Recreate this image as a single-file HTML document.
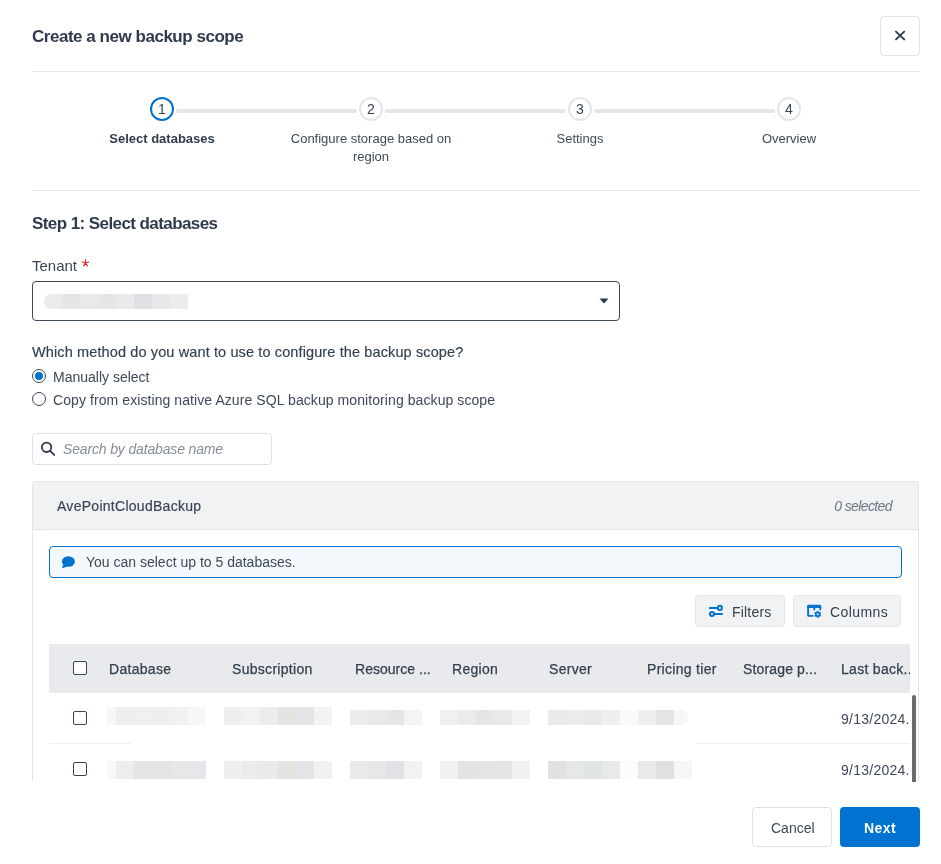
<!DOCTYPE html>
<html><head><meta charset="utf-8">
<style>
*{box-sizing:border-box;margin:0;padding:0}
html,body{width:941px;height:864px;overflow:hidden;background:#fff}
body{will-change:transform;position:relative;font-family:"Liberation Sans",sans-serif;color:#3a4656}
.a{position:absolute;white-space:nowrap}
.t{line-height:20px;height:20px}
.hr{position:absolute;height:1px;background:#e4e7ea}
.circ{position:absolute;width:24px;height:24px;border-radius:50%;border:2px solid #e4e6e9;background:#fff;text-align:center;font-size:14px;line-height:20px;color:#36424f}
.sline{position:absolute;top:109px;height:4px;border-radius:2px;background:#e4e6e9}
.slab{position:absolute;top:130px;width:200px;text-align:center;font-size:13px;line-height:18px;color:#3f4a58}
.cb{position:absolute;width:14px;height:14px;border:1.5px solid #394655;border-radius:2px;background:#fff}
.th{position:absolute;top:659px;letter-spacing:0.3px;font-size:14px;line-height:20px;color:#33404f;-webkit-text-stroke:0.25px #33404f}
.blocks i{position:absolute;display:block}
</style></head>
<body>
<!-- Title -->
<div class="a t" style="left:32px;top:27px;font-size:17px;font-weight:bold;letter-spacing:-0.47px;color:#2f3b4c">Create a new backup scope</div>
<!-- close -->
<div class="a" style="left:880px;top:16px;width:40px;height:40px;border:1px solid #dfe3e6;border-radius:4px"></div>
<svg class="a" style="left:890px;top:26px" width="20" height="20" viewBox="0 0 20 20"><path d="M6 5.6 L14.2 13.4 M14.2 5.6 L6 13.4" stroke="#2c3a4d" stroke-width="1.9" stroke-linecap="round"/></svg>
<div class="hr" style="left:32px;top:71px;width:888px"></div>

<!-- stepper -->
<div class="sline" style="left:176px;width:181px"></div>
<div class="sline" style="left:385px;width:181px"></div>
<div class="sline" style="left:594px;width:181px"></div>
<div class="circ" style="left:150px;top:97px;border-color:#0073d1">1</div>
<div class="circ" style="left:359px;top:97px">2</div>
<div class="circ" style="left:568px;top:97px">3</div>
<div class="circ" style="left:777px;top:97px">4</div>
<div class="slab" style="left:62px;font-weight:bold;color:#2f3b4c">Select databases</div>
<div class="slab" style="left:271px">Configure storage based on<br>region</div>
<div class="slab" style="left:480px">Settings</div>
<div class="slab" style="left:689px">Overview</div>
<div class="hr" style="left:32px;top:190px;width:888px"></div>

<!-- step 1 -->
<div class="a t" style="left:32px;top:214px;font-size:17px;font-weight:bold;letter-spacing:-0.58px;color:#2f3b4c">Step 1: Select databases</div>
<div class="a t" style="left:32px;top:256px;font-size:15px;color:#3a4656">Tenant</div>
<svg class="a" style="left:81px;top:259px" width="9" height="8" viewBox="0 0 9 8"><path d="M4.5 0.8 V4 M4.5 4 L1.3 3 M4.5 4 L7.7 3 M4.5 4 L2.6 6.8 M4.5 4 L6.4 6.8" stroke="#d3302c" stroke-width="1.3" stroke-linecap="round"/></svg>
<div class="a" style="left:32px;top:281px;width:588px;height:40px;border:1px solid #3b4858;border-radius:4px"></div>
<div class="blocks"><i style="left:44px;top:294px;width:18px;height:15px;background:#eaebed;border-radius:7px 0 0 7px"></i><i style="left:62px;top:294px;width:18px;height:15px;background:#e5e6e8"></i><i style="left:80px;top:294px;width:18px;height:15px;background:#e9e9eb"></i><i style="left:98px;top:294px;width:18px;height:15px;background:#e5e6e8"></i><i style="left:116px;top:294px;width:18px;height:15px;background:#e9eaec"></i><i style="left:134px;top:294px;width:18px;height:15px;background:#dfe0e3"></i><i style="left:152px;top:294px;width:18px;height:15px;background:#e7e8ea"></i><i style="left:170px;top:294px;width:18px;height:15px;background:#ececed"></i></div>
<svg class="a" style="left:599px;top:298px" width="10" height="6" viewBox="0 0 10 6"><path d="M0.5 0.5 H9.5 L5 5.5 Z" fill="#2c3a4c"/></svg>

<div class="a t" style="left:32px;top:342px;font-size:14.5px;letter-spacing:0.12px;color:#33404f;-webkit-text-stroke:0.15px #33404f">Which method do you want to use to configure the backup scope?</div>
<div class="a" style="left:32px;top:369px;width:14px;height:14px;border:1px solid #3b4858;border-radius:50%"></div>
<div class="a" style="left:35px;top:372px;width:8px;height:8px;background:#0073d1;border-radius:50%"></div>
<div class="a t" style="left:53px;top:367px;font-size:14px;color:#3d4958">Manually select</div>
<div class="a" style="left:32px;top:392px;width:14px;height:14px;border:1px solid #3b4858;border-radius:50%"></div>
<div class="a t" style="left:53px;top:390px;font-size:14px;letter-spacing:0.08px;color:#3d4958">Copy from existing native Azure SQL backup monitoring backup scope</div>

<!-- search -->
<div class="a" style="left:32px;top:433px;width:240px;height:32px;border:1px solid #dfe2e5;border-radius:4px"></div>
<svg class="a" style="left:36px;top:438px" width="24" height="22" viewBox="0 0 24 22"><circle cx="10.6" cy="9.3" r="4.7" fill="none" stroke="#2c3a4c" stroke-width="1.8"/><path d="M14.2 12.9 L18.2 16.9" stroke="#2c3a4c" stroke-width="1.9" stroke-linecap="round"/></svg>
<div class="a t" style="left:63px;top:439px;font-size:14px;letter-spacing:-0.15px;font-style:italic;color:#868e98">Search by database name</div>

<!-- panel -->
<div class="a" style="left:32px;top:481px;width:887px;height:300px;border:1px solid #e3e6e9;border-bottom:none;border-radius:4px 4px 0 0;overflow:hidden">
  <div style="position:absolute;left:0;top:0;width:100%;height:48px;background:#f1f2f4;border-bottom:1px solid #e1e4e7"></div>
</div>
<div class="a t" style="left:57px;top:496px;font-size:14px;letter-spacing:0.28px;color:#3a4656;-webkit-text-stroke:0.2px #3a4656">AvePointCloudBackup</div>
<div class="a t" style="left:791px;width:101px;text-align:right;top:496px;font-size:14px;letter-spacing:-0.6px;font-style:italic;color:#6e7782">0 selected</div>

<!-- info -->
<div class="a" style="left:49px;top:546px;width:853px;height:32px;border:1px solid #0073d1;background:#f4f8fc;border-radius:4px"></div>
<svg class="a" style="left:58px;top:552px" width="22" height="20" viewBox="0 0 22 20"><ellipse cx="10.4" cy="9.5" rx="6.5" ry="5.2" fill="#0073d1"/><path d="M5.6 12.6 L4.4 15.8 L9 14.3 Z" fill="#0073d1" stroke="#0073d1" stroke-width="0.7" stroke-linejoin="round"/></svg>
<div class="a t" style="left:86px;top:552px;font-size:14px;color:#3d4958">You can select up to 5 databases.</div>

<!-- filter buttons -->
<div class="a" style="left:695px;top:595px;width:90px;height:32px;background:#f1f2f4;border:1px solid #e3e5e8;border-radius:4px"></div>
<svg class="a" style="left:704px;top:600px" width="24" height="22" viewBox="0 0 24 22"><path d="M5.8 7.9 H13.2 M10.4 14 H18" stroke="#0073d1" stroke-width="2" stroke-linecap="round"/><circle cx="15.9" cy="7.9" r="2.05" fill="none" stroke="#0073d1" stroke-width="2"/><circle cx="8" cy="14" r="2.05" fill="none" stroke="#0073d1" stroke-width="2"/></svg>
<div class="a t" style="left:732px;top:602px;font-size:14px;letter-spacing:0.2px;color:#33404f">Filters</div>
<div class="a" style="left:793px;top:595px;width:108px;height:32px;background:#f1f2f4;border:1px solid #e3e5e8;border-radius:4px"></div>
<svg class="a" style="left:802px;top:600px" width="24" height="22" viewBox="0 0 24 22"><path d="M10.6 15.9 H7 Q6.1 15.9 6.1 15 V6.5 M18.3 6.5 V9.6 M12.3 7 V9.6" fill="none" stroke="#0073d1" stroke-width="1.9" stroke-linecap="round"/><path d="M5.1 7.9 V6 Q5.1 4.7 6.4 4.7 H17.8 Q19.1 4.7 19.1 6 V7.9 Z" fill="#0073d1"/><g transform="translate(15.7 14.3)" fill="#0073d1"><circle r="2.6"/><rect x="-0.9" y="-3.5" width="1.8" height="7" rx="0.4"/><rect x="-0.9" y="-3.5" width="1.8" height="7" rx="0.4" transform="rotate(60)"/><rect x="-0.9" y="-3.5" width="1.8" height="7" rx="0.4" transform="rotate(120)"/></g><circle cx="15.7" cy="14.3" r="0.95" fill="#f1f2f4"/></svg>
<div class="a t" style="left:830px;top:602px;font-size:14px;letter-spacing:0.4px;color:#33404f">Columns</div>

<!-- table -->
<div class="a" style="left:49px;top:644px;width:861px;height:49px;background:#e8eaed"></div>
<div class="cb" style="left:73px;top:661px"></div>
<div class="th" style="left:109px">Database</div>
<div class="th" style="left:232px">Subscription</div>
<div class="th" style="left:355px;letter-spacing:0.02px">Resource ...</div>
<div class="th" style="left:452px">Region</div>
<div class="th" style="left:549px">Server</div>
<div class="th" style="left:647px">Pricing tier</div>
<div class="th" style="left:743px;letter-spacing:0.15px">Storage p...</div>
<div class="a" style="left:841px;top:644px;width:69px;height:49px;overflow:hidden"><div class="th" style="left:0;top:15px">Last back...</div></div>

<div class="hr" style="left:49px;top:743px;width:82px;background:#eceef0"></div><div class="hr" style="left:696px;top:743px;width:214px;background:#eceef0"></div>
<div class="blocks"><i style="left:107px;top:707px;width:9px;height:18px;background:#f7f7f7"></i><i style="left:107px;top:761px;width:9px;height:18px;background:#f8f8f8"></i><i style="left:116px;top:707px;width:18px;height:18px;background:#eeeff0"></i><i style="left:116px;top:761px;width:18px;height:18px;background:#eceded"></i><i style="left:134px;top:707px;width:18px;height:18px;background:#eff0f0"></i><i style="left:134px;top:761px;width:18px;height:18px;background:#e3e4e7"></i><i style="left:152px;top:707px;width:18px;height:18px;background:#efefef"></i><i style="left:152px;top:761px;width:18px;height:18px;background:#e4e4e4"></i><i style="left:170px;top:707px;width:18px;height:18px;background:#f1f1f1"></i><i style="left:170px;top:761px;width:18px;height:18px;background:#e6e7e7"></i><i style="left:188px;top:707px;width:18px;height:18px;background:#f6f7f8"></i><i style="left:188px;top:761px;width:18px;height:18px;background:#e5e7ea"></i><i style="left:224px;top:707px;width:18px;height:18px;background:#efefef"></i><i style="left:224px;top:761px;width:18px;height:18px;background:#eeefef"></i><i style="left:242px;top:707px;width:18px;height:18px;background:#f1f2f2"></i><i style="left:242px;top:761px;width:18px;height:18px;background:#ebebeb"></i><i style="left:260px;top:707px;width:18px;height:18px;background:#ebeced"></i><i style="left:260px;top:761px;width:18px;height:18px;background:#e9eaea"></i><i style="left:278px;top:707px;width:18px;height:18px;background:#e3e3e1"></i><i style="left:278px;top:761px;width:18px;height:18px;background:#e3e3e0"></i><i style="left:296px;top:707px;width:18px;height:18px;background:#e4e5e8"></i><i style="left:296px;top:761px;width:18px;height:18px;background:#e3e4e7"></i><i style="left:314px;top:707px;width:18px;height:18px;background:#f1f2f2"></i><i style="left:314px;top:761px;width:18px;height:18px;background:#f0f1f1"></i><i style="left:350px;top:710px;width:18px;height:15px;background:#ececec"></i><i style="left:350px;top:761px;width:18px;height:18px;background:#e8e9e9"></i><i style="left:368px;top:710px;width:18px;height:15px;background:#e8e9ea"></i><i style="left:368px;top:761px;width:18px;height:18px;background:#e6e7e9"></i><i style="left:386px;top:710px;width:18px;height:15px;background:#e5e6e8"></i><i style="left:386px;top:761px;width:18px;height:18px;background:#e1e2e5"></i><i style="left:404px;top:710px;width:18px;height:15px;background:#f4f4f4"></i><i style="left:404px;top:761px;width:18px;height:18px;background:#f2f2f3"></i><i style="left:440px;top:710px;width:18px;height:15px;background:#f0f0f0"></i><i style="left:440px;top:761px;width:18px;height:18px;background:#f1f1f1"></i><i style="left:458px;top:710px;width:18px;height:15px;background:#ebebec"></i><i style="left:458px;top:761px;width:18px;height:18px;background:#e3e3e3"></i><i style="left:476px;top:710px;width:18px;height:15px;background:#e5e6e6"></i><i style="left:476px;top:761px;width:18px;height:18px;background:#e4e4e4"></i><i style="left:494px;top:710px;width:18px;height:15px;background:#e8e9e9"></i><i style="left:494px;top:761px;width:18px;height:18px;background:#e4e5e5"></i><i style="left:512px;top:710px;width:18px;height:15px;background:#f1f2f2"></i><i style="left:512px;top:761px;width:18px;height:18px;background:#f0f0f0"></i><i style="left:548px;top:710px;width:18px;height:15px;background:#e9eaea"></i><i style="left:548px;top:761px;width:18px;height:18px;background:#e1e1e1"></i><i style="left:566px;top:710px;width:18px;height:15px;background:#ebebeb"></i><i style="left:566px;top:761px;width:18px;height:18px;background:#e6e7e8"></i><i style="left:584px;top:710px;width:18px;height:15px;background:#e8eaea"></i><i style="left:584px;top:761px;width:18px;height:18px;background:#e1e4e5"></i><i style="left:602px;top:710px;width:18px;height:15px;background:#eeeff0"></i><i style="left:602px;top:761px;width:18px;height:18px;background:#e8e9ea"></i><i style="left:620px;top:710px;width:18px;height:15px;background:#fafafa"></i><i style="left:620px;top:761px;width:18px;height:18px;background:#fcfcfc"></i><i style="left:638px;top:710px;width:18px;height:15px;background:#efefef"></i><i style="left:638px;top:761px;width:18px;height:18px;background:#e8e9ea"></i><i style="left:656px;top:710px;width:18px;height:15px;background:#e4e5e4"></i><i style="left:656px;top:761px;width:18px;height:18px;background:#dfe1e0"></i><i style="left:674px;top:710px;width:14px;height:15px;background:#f5f6f8;border-radius:0 7px 7px 0"></i><i style="left:674px;top:761px;width:18px;height:18px;background:#f5f6f8"></i></div>
<div class="cb" style="left:73px;top:711px"></div>
<div class="cb" style="left:73px;top:762px"></div>
<div class="a t" style="left:841px;top:709px;font-size:14px;letter-spacing:0.25px;color:#3d4958">9/13/2024.</div>
<div class="a t" style="left:841px;top:760px;font-size:14px;letter-spacing:0.25px;color:#3d4958">9/13/2024.</div>

<!-- scrollbar -->
<div class="a" style="left:912px;top:695px;width:4px;height:87px;background:#6a6c70;border-radius:2px 2px 0 0"></div>

<!-- footer buttons -->
<div class="a" style="left:752px;top:807px;width:80px;height:40px;border:1px solid #dfe2e5;border-radius:4px"></div>
<div class="a t" style="left:771px;top:818px;font-size:14px;color:#3d4958">Cancel</div>
<div class="a" style="left:840px;top:807px;width:80px;height:40px;background:#0073d1;border-radius:4px"></div>
<div class="a t" style="left:864px;top:818px;font-size:14px;letter-spacing:0.4px;font-weight:bold;color:#fff">Next</div>
</body></html>
